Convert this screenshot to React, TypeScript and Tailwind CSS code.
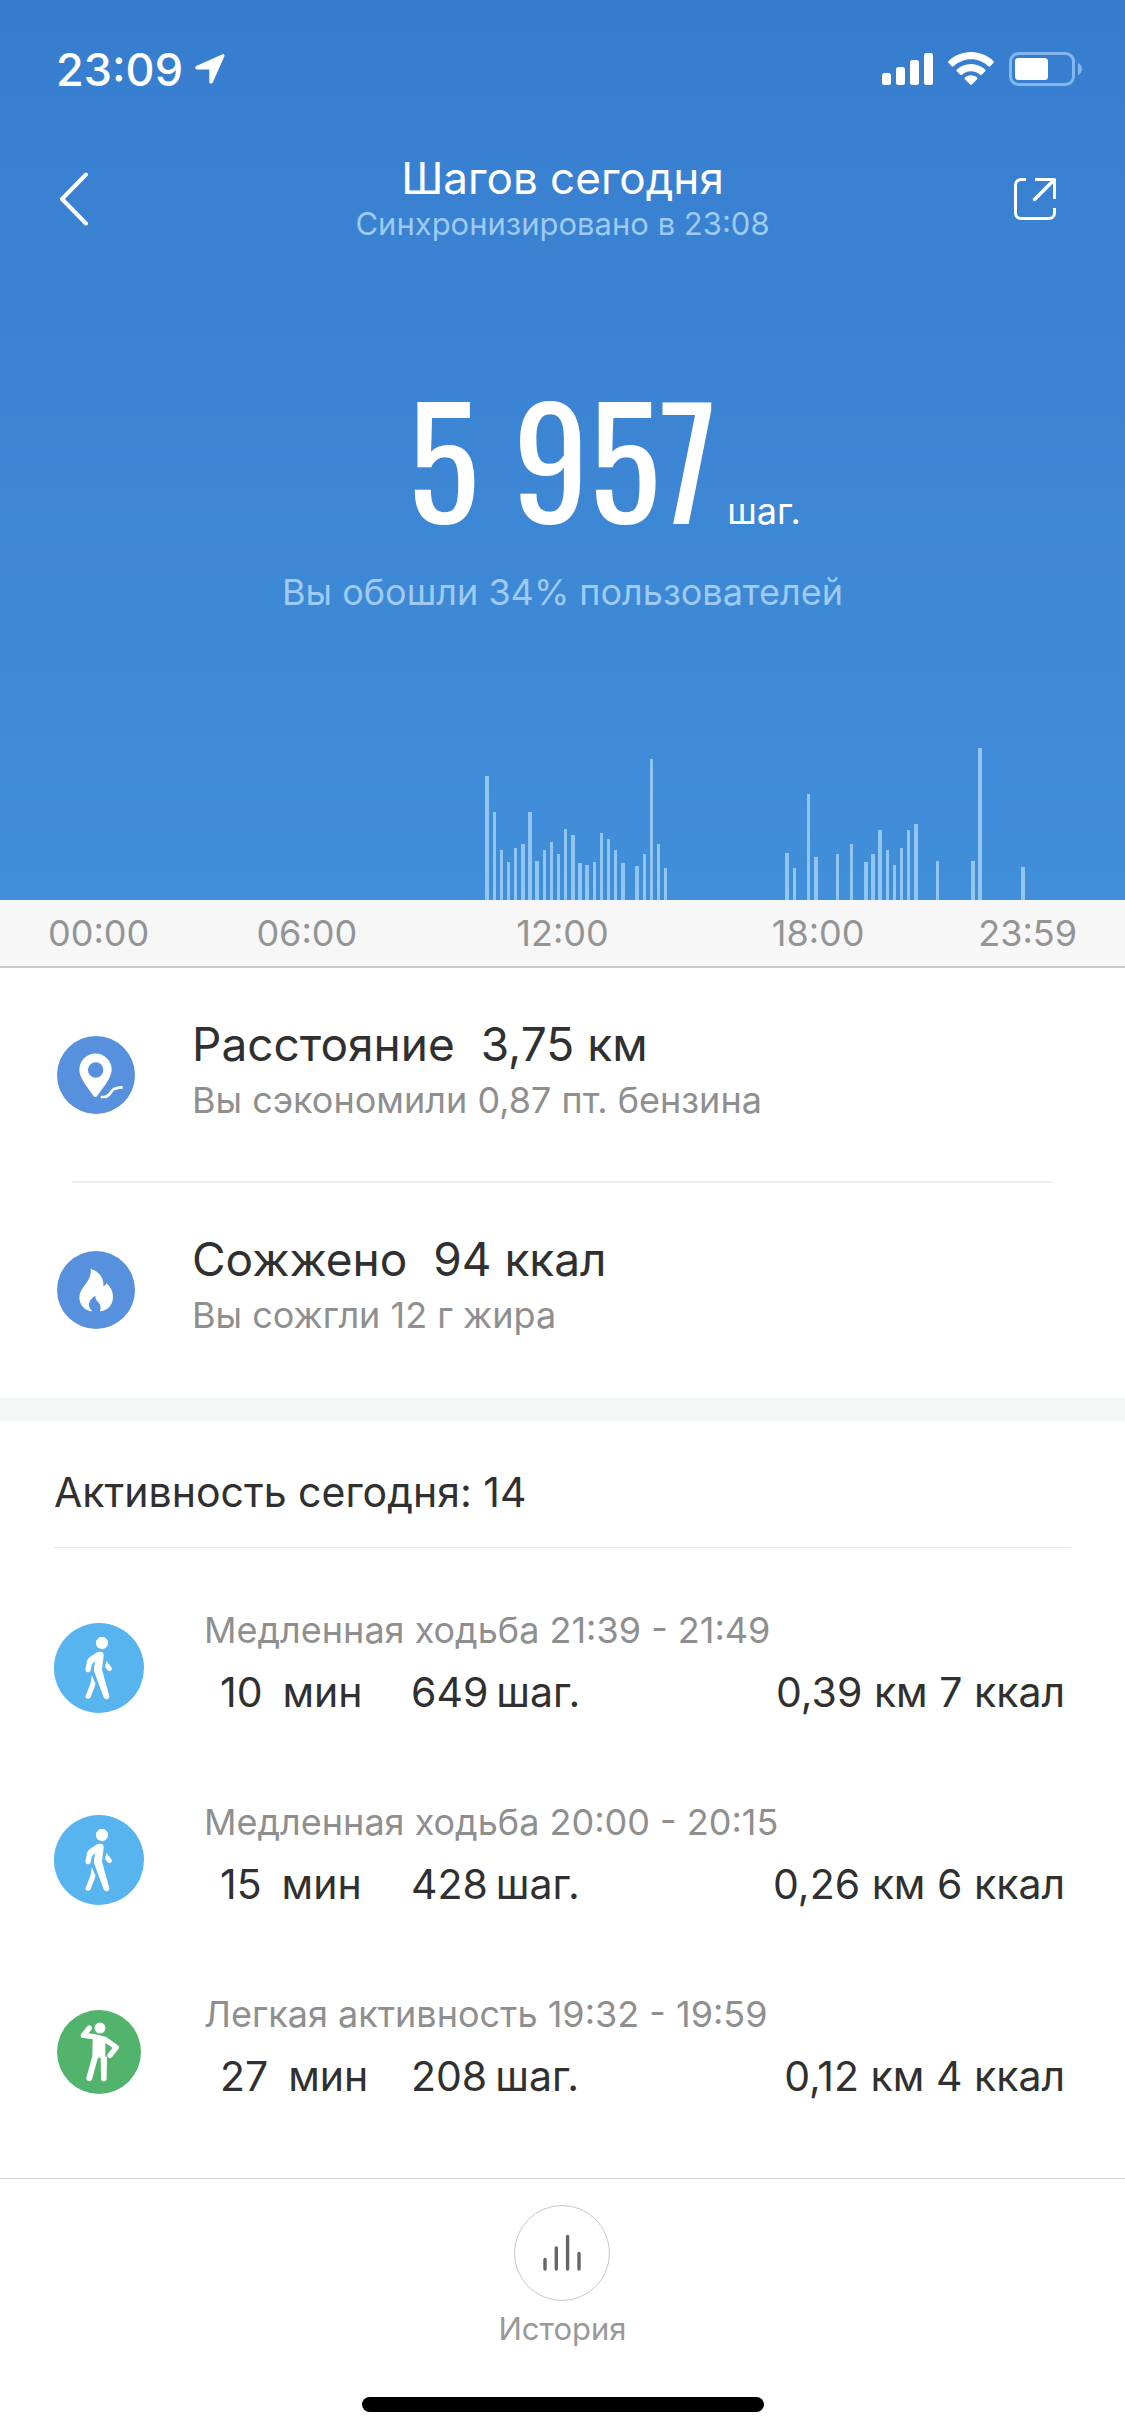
import type { ReactNode } from 'react'

// ── Data ──

interface Activity {
  kind: 'walk' | 'light'
  name: string
  time: string
  minutes: number
  steps: number
  km: string
  kcal: number
}

const ACTIVITIES: Activity[] = [
  { kind: 'walk', name: 'Медленная ходьба', time: '21:39 - 21:49', minutes: 10, steps: 649, km: '0,39', kcal: 7 },
  { kind: 'walk', name: 'Медленная ходьба', time: '20:00 - 20:15', minutes: 15, steps: 428, km: '0,26', kcal: 6 },
  { kind: 'light', name: 'Легкая активность', time: '19:32 - 19:59', minutes: 27, steps: 208, km: '0,12', kcal: 4 },
]

// [x, height, width] of every bar on the 1125 wide day axis
const BARS: [number, number, number][] = [
  [485, 124, 4], [493, 88, 3], [500, 50, 3], [507, 38, 3], [514, 52, 3],
  [521, 56, 4], [528, 88, 4], [535, 39, 4], [543, 50, 3], [550, 58, 3],
  [557, 46, 3], [564, 71, 3], [571, 65, 4], [578, 37, 4], [585, 35, 4],
  [593, 38, 3], [600, 67, 3], [607, 61, 3], [614, 50, 3], [621, 37, 4],
  [635, 34, 4], [643, 46, 3], [650, 141, 3], [657, 56, 3], [664, 32, 3],
  [785, 47, 4], [793, 32, 3], [807, 106, 3], [814, 43, 4], [836, 46, 3],
  [850, 56, 3], [864, 38, 4], [871, 46, 4], [878, 70, 4], [886, 50, 3],
  [893, 35, 3], [900, 52, 3], [907, 70, 3], [914, 76, 4], [936, 39, 3],
  [971, 39, 4], [978, 152, 4], [1021, 33, 4],
]

// ── Icons ──

function LocationIcon() {
  return (
    <svg className="w-[30px] h-[30px]" viewBox="0 0 30 30" fill="#fff">
      <path d="M27.6.3 1.8 11.7C-.6 12.8-.2 15.4 2.4 15.4H13.6c.4 0 .7.3.7.7V27.4c0 2.6 2.7 3 3.7.7L29.2 2.7C29.9 1 29.1-.3 27.6.3z" />
    </svg>
  )
}

function SignalIcon() {
  return (
    <svg className="w-[51px] h-[34px]" viewBox="0 0 51 34" fill="#fff">
      <rect x="0" y="21" width="9" height="12" rx="2.5" />
      <rect x="14" y="15" width="9" height="18" rx="2.5" />
      <rect x="28" y="8" width="9" height="25" rx="2.5" />
      <rect x="42" y="1" width="9" height="32" rx="2.5" />
    </svg>
  )
}

function WifiIcon() {
  return (
    <svg className="w-[46px] h-[34px]" viewBox="0 0 46 34" fill="#fff">
      <path d="M23 0C14.200 0 6.300 3.500.5 9.100c-.5.500-.5 1.100-.1 1.600l3.500 3.600c.5.500 1.200.5 1.700 0C10.200 10 16.300 7.300 23 7.300S35.800 10 40.400 14.300c.5.500 1.200.5 1.700 0l3.500-3.600c.4-.5.4-1.100-.1-1.600C39.700 3.500 31.800 0 23 0z" />
      <path d="M23 11.900c-5.500 0-10.500 2.200-14.200 5.700-.5.500-.5 1.100 0 1.600l3.500 3.500c.5.500 1.100.5 1.600 0 2.400-2.200 5.600-3.500 9.100-3.500s6.700 1.300 9.100 3.500c.5.500 1.100.5 1.600 0l3.500-3.500c.5-.5.5-1.100 0-1.600C33.500 14.100 28.500 11.900 23 11.900z" />
      <path d="M23 23.300c-2.300 0-4.500.9-6.100 2.300-.5.500-.5 1.100 0 1.600l5.300 5.400c.5.500 1.100.5 1.600 0l5.300-5.400c.5-.5.500-1.100 0-1.600-1.600-1.400-3.800-2.300-6.100-2.300z" />
    </svg>
  )
}

function BatteryIcon() {
  return (
    <svg className="w-[74px] h-[34px]" viewBox="0 0 74 34">
      <rect x="1.500" y="1.500" width="63" height="31" rx="8" fill="none" stroke="#83b6ec" strokeWidth="3" />
      <rect x="6" y="6" width="33" height="22" rx="3.500" fill="#fff" />
      <path d="M69 11c2.600 1.200 4 3.500 4 6s-1.400 4.800-4 6z" fill="#83b6ec" />
    </svg>
  )
}

function BackIcon() {
  return (
    <svg className="w-[30px] h-[54px]" viewBox="0 0 30 54" fill="none" stroke="#fff" strokeWidth="4" strokeLinecap="round" strokeLinejoin="round">
      <path d="M27 2.500 3 27 27 51.500" />
    </svg>
  )
}

function ShareIcon() {
  return (
    <svg className="w-[42px] h-[42px]" viewBox="0 0 42 42" fill="none" stroke="#fff" strokeWidth="3" strokeLinecap="butt" strokeLinejoin="round">
      <path d="M12 1.500H7A5.500 5.500 0 0 0 1.500 7v28A5.500 5.500 0 0 0 7 40.500h28a5.500 5.500 0 0 0 5.500-5.500v-5" />
      <path d="M21 1.500h19.500V21" />
      <path d="M39.500 2.500 20.500 21.500" strokeWidth="3.500" strokeLinecap="round" />
    </svg>
  )
}

function DistanceIcon() {
  return (
    <svg className="size-[78px] shrink-0" viewBox="0 0 234 234">
      <circle cx="117" cy="117" r="117" fill="#5790dc" />
      <path
        fill="#fff"
        fillRule="evenodd"
        d="M115 183c-2 0-4-1-6-4C93 156 67 126 67 102a48 49 0 0 1 97 0c0 24-27 54-43 77-2 3-4 4-6 4zM116 79a23 23 0 1 0 0 46 23 23 0 0 0 0-46z"
      />
      <path d="M131 183h11c16 0 18-17 29-24 8-4 13-5 26-5" fill="none" stroke="#fff" strokeWidth="8" />
    </svg>
  )
}

function FlameIcon() {
  return (
    <svg className="size-[78px] shrink-0" viewBox="0 0 234 234">
      <circle cx="117" cy="117" r="117" fill="#5790dc" />
      <path
        fill="#fff"
        d="M101 53c25 8 41 29 38 53 5-2 8-5 9-10 13 11 20 26 20 42 0 23-16 40-37 43 0-1-3 0-2-2 5-12-1-22-8-28-5-5-7-10-5-17-12 5-20 16-20 28 0 9 5 14 9 17-1 2-3 2-4 2-20-4-34-21-34-42 0-32 40-48 34-86z"
      />
    </svg>
  )
}

function WalkIcon() {
  return (
    <svg className="size-[90px]" viewBox="0 0 270 270">
      <circle cx="135" cy="135" r="135" fill="#57b4ee" />
      <g fill="#fff">
        <circle cx="144" cy="60" r="18.500" />
        <path d="M139 86c8 0 11 5 10 13l-5 41 22 79c2 11-13 13-17 4l-25-68c-4-9-5-12-4-20l3-20-9 8-5 21c-3 7-16 5-15-5l5-24c2-6 3-8 8-12l20-14c4-2 7-3 12-3z" />
        <path d="m113 156 12 27-15 39c-4 9-18 6-15-4l15-38z" />
        <path d="m157 114 15 18c5 8-2 15-9 11l-10-10z" />
      </g>
    </svg>
  )
}

function StandIcon() {
  return (
    <svg className="size-[84px]" viewBox="0 0 252 252">
      <circle cx="126" cy="126" r="126" fill="#52b36c" />
      <circle cx="129" cy="54" r="16.500" fill="#fff" />
      <path
        fill="#fff"
        d="M107 86h38v52l5 4-1 64c-1 11-16 11-17 0l-1-63h-8l-18 65c-4 10-19 6-17-5l18-65z"
      />
      <g fill="none" stroke="#fff" strokeWidth="16" strokeLinecap="round" strokeLinejoin="round">
        <path d="M97 54 79 76l32 4 34 9 33 23-19 24" />
      </g>
    </svg>
  )
}

function HistoryIcon() {
  return (
    <svg className="w-[38px] h-[38px]" viewBox="0 0 38 38" stroke="#666" strokeWidth="3.400" strokeLinecap="round">
      <path d="M2 25.500V35M13.300 14V35M24.600 2.500V35M36 19.500V35" />
    </svg>
  )
}

// ── Sections ──

function StatRow({ icon, label, value, note }: { icon: ReactNode; label: string; value: string; note: string }) {
  return (
    <div className="flex items-center gap-[57px] px-[57px] h-[213px]">
      {icon}
      <div className="pb-2.5">
        <div className="flex gap-[26px] text-[46px] leading-[60px] text-[#303030]">
          <span>{label}</span>
          <span>{value}</span>
        </div>
        <p className="text-[36px] leading-[52px] text-[#8f8f8f]">{note}</p>
      </div>
    </div>
  )
}

function ActivityRow({ item }: { item: Activity }) {
  return (
    <li className="flex items-center h-48 pl-[54px] pr-15">
      <div className="w-[90px] flex justify-center shrink-0">
        {item.kind === 'walk' ? <WalkIcon /> : <StandIcon />}
      </div>
      <div className="flex-1 pl-15 pb-2">
        <p className="text-[36px] leading-[56px] text-[#8f8f8f]">
          {item.name} {item.time}
        </p>
        <div className="flex text-[41px] leading-[68px] text-[#303030]">
          <div className="flex gap-5 w-[207px] pl-4">
            <span>{item.minutes}</span>
            <span>мин</span>
          </div>
          <div className="flex gap-2">
            <span>{item.steps}</span>
            <span>шаг.</span>
          </div>
          <span className="ml-auto">
            {item.km} км {item.kcal} ккал
          </span>
        </div>
      </div>
    </li>
  )
}

export default function App() {
  return (
    <div className="min-h-screen flex flex-col bg-white font-['Inter','Liberation_Sans',sans-serif]">
      {/* Summary */}
      <header className="flex flex-col h-[900px] bg-linear-to-b from-[#377dcf] to-[#418ed9] text-white">
        <div className="flex items-center justify-between h-[138px] pl-14 pr-[42px]">
          <div className="flex items-center gap-3">
            <span className="text-[45px] leading-none font-medium">23:09</span>
            <LocationIcon />
          </div>
          <div className="flex items-center gap-[15px]">
            <SignalIcon />
            <WifiIcon />
            <BatteryIcon />
          </div>
        </div>

        <nav className="grid grid-cols-[1fr_auto_1fr] items-center h-[122px] px-[59px]">
          <button type="button" aria-label="Назад" className="justify-self-start">
            <BackIcon />
          </button>
          <div className="text-center pb-1">
            <h1 className="text-[44px] leading-[54px]">Шагов сегодня</h1>
            <p className="text-[31px] leading-[38px] text-[#9ecaf3]">Синхронизировано в 23:08</p>
          </div>
          <button type="button" aria-label="Поделиться" className="justify-self-end pr-2.5">
            <ShareIcon />
          </button>
        </nav>

        <div className="grid grid-cols-[1fr_auto_1fr] items-baseline mt-[106px]">
          <span className="col-start-2 text-[150px] leading-[180px] font-['Oswald','Roboto_Condensed','Liberation_Sans_Narrow','Inter',sans-serif]">
            5 957
          </span>
          <span className="pl-2.5 text-[36px] leading-[44px]">шаг.</span>
        </div>
        <p className="mt-4 text-center text-[36px] leading-[60px] text-[#9ecaf3]">Вы обошли 34% пользователей</p>

        <svg className="mt-auto w-full h-[152px]" viewBox="0 0 1125 152" preserveAspectRatio="none" fill="#92c6f0">
          {BARS.map(([x, h, w]) => (
            <rect key={x} x={x} y={152 - h} width={w} height={h} />
          ))}
        </svg>
      </header>

      <div className="grid grid-cols-[7fr_10fr_10fr_10fr_7fr] items-center h-[68px] bg-[#f7f7f7] border-b-2 border-[#c9c9c9] text-center text-[36px] text-[#949494]">
        <span className="pl-12 text-left">00:00</span>
        <span>06:00</span>
        <span>12:00</span>
        <span>18:00</span>
        <span className="pr-12 text-right">23:59</span>
      </div>

      {/* Distance and calories */}
      <section className="pb-0.5">
        <StatRow icon={<DistanceIcon />} label="Расстояние" value="3,75 км" note="Вы сэкономили 0,87 пт. бензина" />
        <hr className="mx-18 border-t-2 border-[#ececec]" />
        <StatRow icon={<FlameIcon />} label="Сожжено" value="94 ккал" note="Вы сожгли 12 г жира" />
      </section>

      <div className="h-6 bg-[#f4f6f6]" />

      {/* Activities */}
      <section className="pb-[30px]">
        <h2 className="mx-[54px] pt-10 pb-[25px] text-[41px] leading-[60px] text-[#303030] border-b border-[#e8e8e8]">
          Активность сегодня: 14
        </h2>
        <ul className="pt-6">
          {ACTIVITIES.map((item) => (
            <ActivityRow key={item.time} item={item} />
          ))}
        </ul>
      </section>

      {/* Bottom bar */}
      <footer className="flex-1 flex flex-col items-center border-t border-[#cfcfcf] pt-[26px] pb-6">
        <button type="button" className="flex flex-col items-center gap-2 text-[31px] leading-[40px] text-[#999]">
          <span className="flex items-center justify-center size-24 rounded-full border border-[#c8c8c8]">
            <HistoryIcon />
          </span>
          История
        </button>
        <div className="mt-auto w-[402px] h-[15px] rounded-full bg-black" />
      </footer>
    </div>
  )
}
